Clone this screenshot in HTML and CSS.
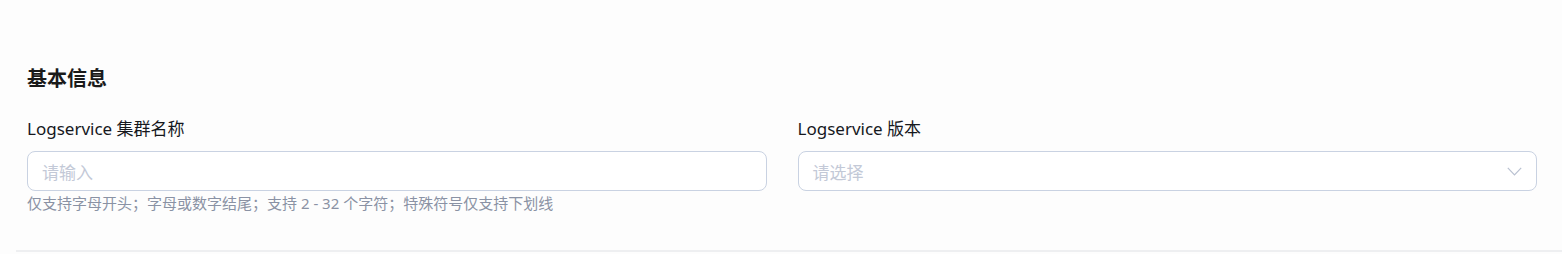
FILE: index.html
```html
<!DOCTYPE html>
<html lang="zh-CN">
<head>
<meta charset="utf-8">
<link rel="stylesheet" href="styles.css">
</head>
<body>
<div class="page">
  <section class="section">
    <h2 class="section-title">基本信息</h2>
    <div class="form-row">
      <div class="form-item">
        <label class="form-label">Logservice 集群名称</label>
        <div class="input">
          <span class="placeholder">请输入</span>
        </div>
        <div class="help">仅支持字母开头；字母或数字结尾；支持 2 - 32 个字符；特殊符号仅支持下划线</div>
      </div>
      <div class="form-item">
        <label class="form-label">Logservice 版本</label>
        <div class="input select">
          <span class="placeholder">请选择</span>
          <svg class="arrow" width="15" height="9" viewBox="0 0 15 9"><path d="M0.8 0.8 L7.5 7.8 L14.2 0.8" fill="none" stroke="#b9c1d1" stroke-width="1.2"/></svg>
        </div>
      </div>
    </div>
  </section>
</div>
</body>
</html>
```

FILE: styles.css
```css
html, body {
  margin: 0;
  padding: 0;
  background: #fdfdfd;
}
body {
  font-family: "Noto Sans", "Noto Sans CJK SC", sans-serif;
  color: #1d1f24;
  width: 1562px;
  height: 254px;
  overflow: hidden;
}
.page {
  padding-top: 60px;
  padding-left: 16px;
}
.section {
  padding: 0 25px 36px 11px;
  border-bottom: 2px solid #eeeff1;
}
.section-title {
  margin: 0;
  font-family: "Noto Sans CJK SC", sans-serif;
  font-size: 20px;
  font-weight: 700;
  line-height: 36px;
  color: #1a1a1a;
}
.form-row {
  display: grid;
  grid-template-columns: 1fr 1fr;
  column-gap: 31px;
  margin-top: 22px;
}
.form-item {
  display: flex;
  flex-direction: column;
}
.form-label {
  font-size: 17px;
  line-height: 22px;
  color: #16181d;
  margin-bottom: 11px;
}
.input {
  height: 40px;
  box-sizing: border-box;
  border: 1px solid #c9d2e2;
  border-radius: 8px;
  background: #fff;
  display: flex;
  align-items: center;
  padding: 0 14px;
}
.placeholder {
  font-family: "Noto Sans CJK SC", sans-serif;
  font-size: 17px;
  color: #c3c9d7;
}
.select {
  justify-content: space-between;
}
.arrow {
  display: block;
}
.help {
  margin-top: 1px;
  font-size: 15px;
  line-height: 22px;
  color: #8a92a4;
}
```
